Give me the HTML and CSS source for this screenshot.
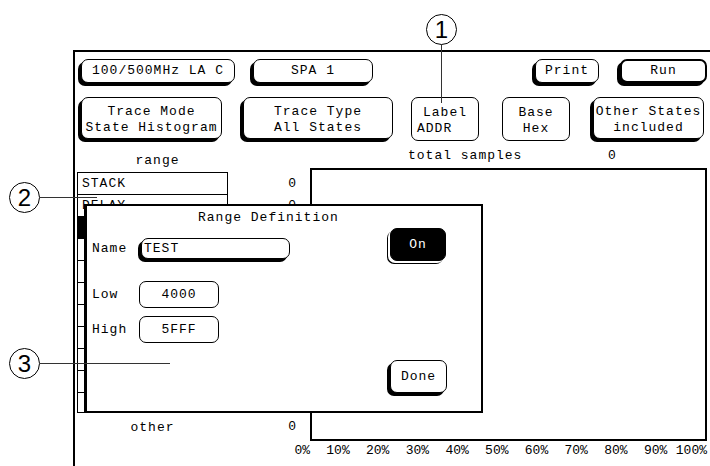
FILE: index.html
```html
<!DOCTYPE html>
<html lang="en">
<head>
	<meta charset="UTF-8">
	<title>State Histogram - Range Definition</title>
	<link rel="stylesheet" href="styles.css">
</head>
<body>
<div class="page">
	<div class="screen">
		<div class="row row-top">
			<div class="btn raised b-analyzer">100/500MHz LA C</div>
			<div class="btn raised b-spa">SPA 1</div>
			<div class="btn raised b-print">Print</div>
			<div class="btn raised heavy b-run">Run</div>
		</div>
		<div class="row row-menu">
			<div class="btn raised two b-mode"><span>Trace Mode</span><span>State Histogram</span></div>
			<div class="btn raised two b-type"><span>Trace Type</span><span>All States</span></div>
			<div class="btn two b-label"><span>Label</span><span class="left">ADDR</span></div>
			<div class="btn two b-base"><span>Base</span><span>Hex</span></div>
			<div class="btn raised two b-other"><span>Other States</span><span>included</span></div>
		</div>
		<div class="lower">
			<div class="ranges">
				<div class="range-head">range</div>
				<ul class="range-list">
					<li>STACK</li>
					<li>DELAY</li>
					<li class="sel"></li>
					<li></li>
					<li></li>
					<li></li>
					<li></li>
					<li></li>
					<li></li>
					<li></li>
					<li></li>
				</ul>
				<div class="other">other</div>
			</div>
			<div class="counts">
				<div class="range-head"></div>
				<ul class="count-list">
					<li>0</li>
					<li>0</li>
					<li></li>
					<li></li>
					<li></li>
					<li></li>
					<li></li>
					<li></li>
					<li></li>
					<li></li>
					<li></li>
				</ul>
				<div class="other">0</div>
			</div>
			<div class="chart-col">
				<div class="chart-head"><span class="samples">total samples</span><span>0</span></div>
				<div class="chart"></div>
				<div class="axis">
					<span>0%</span><span>10%</span><span>20%</span><span>30%</span><span>40%</span><span>50%</span>
					<span>60%</span><span>70%</span><span>80%</span><span>90%</span><span>100%</span>
				</div>
			</div>
		</div>

		<!-- range definition pop-up -->
		<div class="dialog">
			<div class="dlg-title">Range Definition</div>
			<div class="dlg-body">
				<div class="fields">
					<div class="field-row">
						<span class="f-label">Name</span>
						<div class="btn raised name-field">TEST</div>
					</div>
					<div class="field-row row-low">
						<span class="f-label">Low</span>
						<div class="btn val-field">4000</div>
					</div>
					<div class="field-row row-high">
						<span class="f-label">High</span>
						<div class="btn val-field">5FFF</div>
					</div>
				</div>
				<div class="side">
					<div class="btn on">On</div>
					<div class="btn raised done">Done</div>
				</div>
			</div>
		</div>
	</div>

	<!-- numbered callouts -->
	<div class="callout c1">1</div>
	<div class="lead lead1"></div>
	<div class="callout c2">2</div>
	<div class="lead lead2"></div>
	<div class="callout c3">3</div>
	<div class="lead lead3"></div>
</div>
</body>
</html>
```

FILE: styles.css
```css
* {
	margin: 0;
	padding: 0;
	box-sizing: border-box;
}
body {
	background: #fff;
	color: #000;
	font-family: "Liberation Mono", "DejaVu Sans Mono", monospace;
	font-size: 13px;
	letter-spacing: 1px;
	overflow: hidden;
}
ul {
	list-style: none;
}
.page {
	position: relative;
	width: 710px;
	height: 466px;
	padding: 50px 0 0 73px;
	overflow: hidden;
}
.screen {
	position: relative;
	height: 416px;
	border-top: 2px solid #000;
	border-left: 2px solid #000;
	padding: 7px 3px 0 0;
}

/* buttons */
.row {
	display: flex;
	align-items: flex-start;
}
.btn {
	display: flex;
	align-items: center;
	justify-content: center;
	border: 1px solid #000;
	border-radius: 7px;
	background: #fff;
	white-space: pre;
	line-height: 16px;
}
.btn.raised {
	box-shadow: -3px 3px 0 0 #000;
}
.btn.heavy {
	border-width: 2px;
}
.btn.two {
	flex-direction: column;
}
.btn.two span {
	align-self: stretch;
	text-align: center;
}
.btn.two span.left {
	text-align: left;
	padding-left: 5px;
}
.row-top .btn {
	height: 24px;
}
.b-analyzer { margin-left: 6px; width: 154px; }
.b-spa { margin-left: 18px; width: 120px; }
.b-print { margin-left: auto; width: 64px; }
.b-run { margin-left: 21px; width: 87px; }

.row-menu {
	margin-top: 14px;
	height: 44px;
}
.row-menu .btn {
	height: 44px;
	padding-top: 4px;
}
.row-menu .btn.raised {
	height: 42px;
}
.b-mode { margin-left: 6px; width: 141px; }
.b-type { margin-left: 21px; width: 150px; }
.b-label { margin-left: 18px; width: 68px; }
.b-base { margin-left: 23px; width: 68px; }
.b-other { margin-left: 23px; width: 111px; }

/* histogram area */
.lower {
	display: flex;
	padding-left: 2px;
}
.ranges {
	width: 151px;
}
.range-head {
	height: 31px;
	padding: 12px 0 0 10px;
	line-height: 16px;
	text-align: center;
}
.range-list {
	border: 1px solid #000;
}
.range-list li,
.count-list li {
	height: 22px;
	line-height: 21px;
	padding-left: 4px;
}
.range-list li {
	border-bottom: 1px solid #000;
}
.range-list li:last-child,
.count-list li:last-child {
	height: 19px;
	border-bottom: none;
}
.range-list li.sel {
	background: #000;
}
.count-list {
	padding-top: 1px;
}
.other {
	height: 30px;
	line-height: 30px;
	text-align: center;
}
.counts {
	width: 82px;
	text-align: right;
	padding-right: 13px;
}
.counts .other {
	text-align: right;
}
.chart-col {
	width: 397px;
}
.chart-head {
	display: flex;
	height: 27px;
	padding: 7px 0 0 98px;
	line-height: 16px;
}
.samples {
	width: 200px;
}
.chart {
	height: 273px;
	border: 2px solid #000;
}
.axis {
	display: grid;
	grid-template-columns: repeat(11, 1fr);
	width: 436.7px;
	margin-left: -39.7px;
	line-height: 20px;
	text-align: right;
	letter-spacing: 0;
}

/* dialog */
.dialog {
	position: absolute;
	left: 9px;
	top: 152px;
	width: 399px;
	height: 209px;
	display: flex;
	flex-direction: column;
	background: #fff;
	border: 2px solid #000;
	border-left-width: 3px;
}
.dlg-title {
	height: 20px;
	padding: 4px 0 0 111px;
	line-height: 16px;
}
.dlg-body {
	flex: 1;
	display: flex;
	padding: 0 0 18px 5px;
}
.fields {
	width: 298px;
	padding-top: 12px;
}
.field-row {
	display: flex;
	align-items: center;
}
.f-label {
	width: 47px;
}
.name-field {
	margin-left: 2px;
	width: 149px;
	height: 21px;
	justify-content: flex-start;
	padding-left: 2px;
}
.row-low {
	margin-top: 22px;
}
.row-high {
	margin-top: 8px;
}
.val-field {
	width: 80px;
	height: 27px;
}
.side {
	display: flex;
	flex-direction: column;
	justify-content: space-between;
	padding-top: 2px;
}
.on {
	width: 56px;
	height: 33px;
	background: #000;
	color: #fff;
	box-shadow: -2px 2px 0 0 #fff, -3px 3px 0 0 #000;
}
.done {
	width: 57px;
	height: 33px;
}

/* callouts */
.callout {
	position: absolute;
	width: 31px;
	height: 31px;
	border: 1px solid #000;
	border-radius: 50%;
	background: #fff;
	display: flex;
	align-items: center;
	justify-content: center;
	font-family: "Liberation Sans", sans-serif;
	font-size: 24px;
	letter-spacing: 0;
}
.c1 { left: 426px; top: 14px; }
.c2 { left: 9px; top: 182px; }
.c3 { left: 9px; top: 348px; }
.lead {
	position: absolute;
	background: #333;
}
.lead1 { left: 441px; top: 44px; width: 1px; height: 59px; }
.lead2 { left: 40px; top: 197px; width: 57px; height: 1px; }
.lead3 { left: 40px; top: 363px; width: 130px; height: 1px; }
```
